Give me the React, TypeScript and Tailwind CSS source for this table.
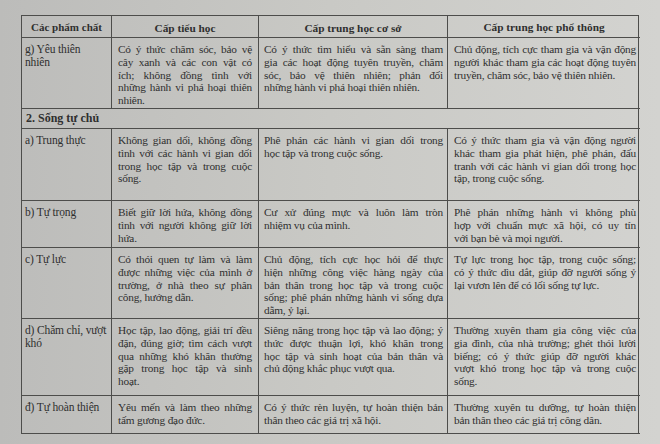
import React from "react";

type Row = {
  name: string[];
  cells: string[][];
};

const ROWS_G: Row = {
  name: ["g) Yêu thiên", "nhiên"],
  cells: [
    [
      "Có ý thức chăm sóc, bảo vệ",
      "cây xanh và các con vật có",
      "ích; không đồng tình với",
      "những hành vi phá hoại thiên",
      "nhiên.",
    ],
    [
      "Có ý thức tìm hiểu và sẵn sàng tham",
      "gia các hoạt động tuyên truyền, chăm",
      "sóc, bảo vệ thiên nhiên; phản đối",
      "những hành vi phá hoại thiên nhiên.",
    ],
    [
      "Chủ động, tích cực tham gia và vận động",
      "người khác tham gia các hoạt động tuyên",
      "truyền, chăm sóc, bảo vệ thiên nhiên.",
    ],
  ],
};

const ROWS: Row[] = [
  {
    name: ["a) Trung thực"],
    cells: [
      [
        "Không gian dối, không đồng",
        "tình với các hành vi gian dối",
        "trong học tập và trong cuộc",
        "sống.",
      ],
      ["Phê phán các hành vi gian dối trong", "học tập và trong cuộc sống."],
      [
        "Có ý thức tham gia và vận động người",
        "khác tham gia phát hiện, phê phán, đấu",
        "tranh với các hành vi gian dối trong học",
        "tập, trong cuộc sống.",
      ],
    ],
  },
  {
    name: ["b) Tự trọng"],
    cells: [
      ["Biết giữ lời hứa, không đồng", "tình với người không giữ lời", "hứa."],
      ["Cư xử đúng mực và luôn làm tròn", "nhiệm vụ của mình."],
      [
        "Phê phán những hành vi không phù",
        "hợp với chuẩn mực xã hội, có uy tín",
        "với bạn bè và mọi người.",
      ],
    ],
  },
  {
    name: ["c) Tự lực"],
    cells: [
      [
        "Có thói quen tự làm và làm",
        "được những việc của mình ở",
        "trường, ở nhà theo sự phân",
        "công, hướng dẫn.",
      ],
      [
        "Chủ động, tích cực học hỏi để thực",
        "hiện những công việc hàng ngày của",
        "bản thân trong học tập và trong cuộc",
        "sống; phê phán những hành vi sống dựa",
        "dẫm, ỷ lại.",
      ],
      [
        "Tự lực trong học tập, trong cuộc sống;",
        "có ý thức dìu dắt, giúp đỡ người sống ỷ",
        "lại vươn lên để có lối sống tự lực.",
      ],
    ],
  },
  {
    name: ["d) Chăm chỉ, vượt", "khó"],
    cells: [
      [
        "Học tập, lao động, giải trí đều",
        "đặn, đúng giờ; tìm cách vượt",
        "qua những khó khăn thường",
        "gặp trong học tập và sinh",
        "hoạt.",
      ],
      [
        "Siêng năng trong học tập và lao động; ý",
        "thức được thuận lợi, khó khăn trong",
        "học tập và sinh hoạt của bản thân và",
        "chủ động khắc phục vượt qua.",
      ],
      [
        "Thường xuyên tham gia công việc của",
        "gia đình, của nhà trường; ghét thói lười",
        "biếng; có ý thức giúp đỡ người khác",
        "vượt khó trong học tập và trong cuộc",
        "sống.",
      ],
    ],
  },
  {
    name: ["đ) Tự hoàn thiện"],
    cells: [
      ["Yêu mến và làm theo những", "tấm gương đạo đức."],
      ["Có ý thức rèn luyện, tự hoàn thiện bản", "thân theo các giá trị xã hội."],
      ["Thường xuyên tu dưỡng, tự hoàn thiện", "bản thân theo các giá trị công dân."],
    ],
  },
];

// Every line but the last is stretched edge to edge, like the printed page.
function Lines({ lines }: { lines: string[] }) {
  return (
    <>
      {lines.map((l, i) => (
        <div
          key={i}
          className={
            i < lines.length - 1
              ? "whitespace-nowrap text-justify [text-align-last:justify]"
              : "whitespace-nowrap"
          }
        >
          {l}
        </div>
      ))}
    </>
  );
}

function NameCell({ lines }: { lines: string[] }) {
  return (
    <div className="border-r border-b border-[#4d4d4b] pl-[3px] pt-[5px] text-[11.5px] tracking-[-0.15px]">
      {lines.map((l, i) => (
        <div key={i} className="whitespace-nowrap">
          {l}
        </div>
      ))}
    </div>
  );
}

function TextCell({ lines, pad }: { lines: string[]; pad: string }) {
  return (
    <div
      className={`border-b border-[#4d4d4b] pt-[5px] text-[11.3px] tracking-[-0.2px] ${pad}`}
    >
      <Lines lines={lines} />
    </div>
  );
}

function DataRow({ row }: { row: Row }) {
  return (
    <>
      <NameCell lines={row.name} />
      <TextCell lines={row.cells[0]} pad="border-r px-[6px]" />
      <TextCell lines={row.cells[1]} pad="border-r pl-[5px] pr-[4px]" />
      <TextCell lines={row.cells[2]} pad="pl-[6px] pr-[4px]" />
    </>
  );
}

export default function App() {
  return (
    <div className="h-[444px] w-[660px] overflow-hidden bg-[#cacac6] bg-gradient-to-r from-[#bcbcba] via-[#c9c9c5] to-[#d3d3d0] pl-[21px] pt-[15px] font-['Liberation_Serif',serif] text-[12px] leading-[12.8px] text-[#2f2f2f]">
      <div className="grid w-[618px] grid-cols-[90px_147px_189px_192px] grid-rows-[22px_71px_20px_72px_47px_71px_77px_38px] border-l border-t border-r border-[#4d4d4b]">
        {/* header */}
        <div className="flex items-center justify-center border-r border-b border-[#4d4d4b] pt-[2px] text-[11px] font-bold">
          Các phẩm chất
        </div>
        <div className="flex items-center justify-center border-r border-b border-[#4d4d4b] pt-[4px] text-[11.3px] font-bold">
          Cấp tiểu học
        </div>
        <div className="flex items-center justify-center border-r border-b border-[#4d4d4b] pt-[4px] text-[11.3px] font-bold">
          Cấp trung học cơ sở
        </div>
        <div className="flex items-center justify-center border-b border-[#4d4d4b] pt-[2px] text-[11.3px] font-bold">
          Cấp trung học phổ thông
        </div>

        <DataRow row={ROWS_G} />

        <div className="col-span-4 flex items-center border-b border-[#4d4d4b] px-1 text-[12px] font-bold">
          2. Sống tự chủ
        </div>

        {ROWS.map((r) => (
          <DataRow key={r.name[0]} row={r} />
        ))}
      </div>
    </div>
  );
}
